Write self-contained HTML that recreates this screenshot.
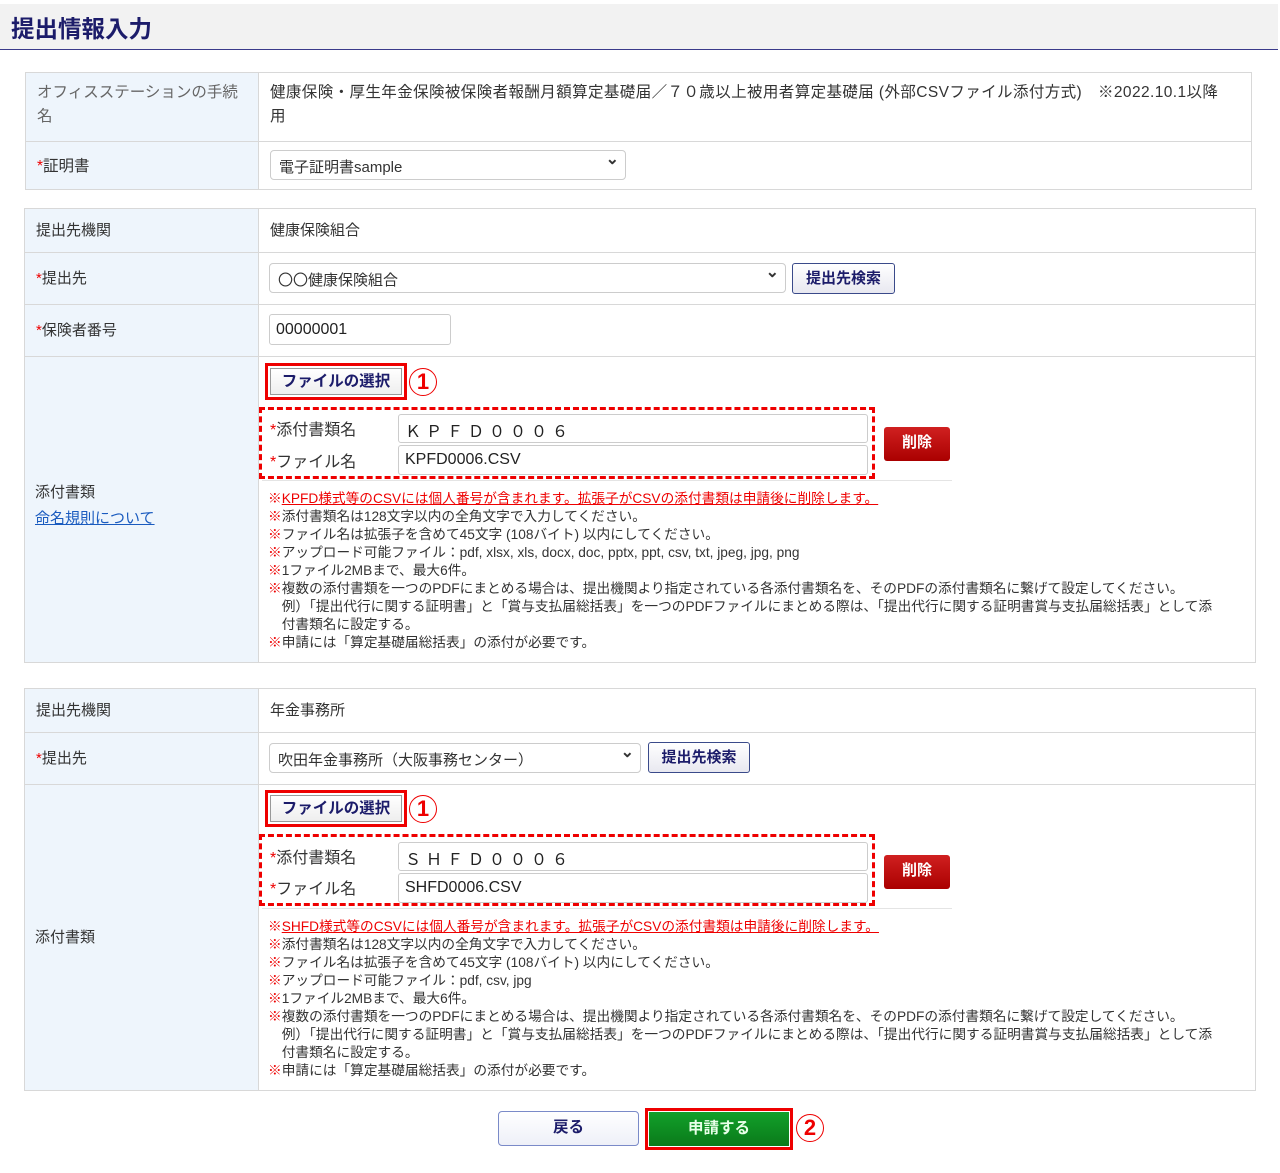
<!DOCTYPE html>
<html><head><meta charset="utf-8"><style>
*{box-sizing:border-box;margin:0;padding:0}
body{width:1280px;height:1173px;background:#fff;font-family:"Liberation Sans","Noto Sans CJK JP",sans-serif;color:#333;position:relative;overflow:hidden}
.a{position:absolute}
.hd{left:0;top:4px;width:1278px;height:46px;background:#f2f2f2;border-bottom:1.5px solid #3a3a8a}
.hd span{position:absolute;left:11px;top:6px;font-size:23.5px;font-weight:bold;color:#1c1c6a}
.tb{border:1px solid #d8d8d8}
.lab{background:#eef5fc;border-right:1px solid #d8d8d8}
.hl{border-top:1px solid #d8d8d8}
.t{font-size:15px;color:#333;white-space:nowrap}
.r{color:#e00}
.sel{border:1px solid #ccc;border-radius:4px;background:#fff;font-size:15px;padding:5px 8px;color:#333}
.sel:after{content:"⌄";position:absolute;right:6px;top:-2px;font-size:16px;font-weight:bold}
.btn{border:1px solid #3a4a8a;border-radius:3px;background:linear-gradient(#fff,#e8e8f0);font-size:15px;font-weight:bold;color:#1c1c6a;text-align:center}
.fb{border:3px solid #e00;background:#fff}
.fb div{position:absolute;left:2px;top:2px;right:2px;bottom:2px;border:1px solid #999;background:linear-gradient(#fff,#eee);font-size:15.5px;font-weight:bold;color:#1c1c6a;text-align:center;line-height:26px}
.num{width:28px;height:28px;border:1px solid #e00;border-radius:50%;color:#e00;font-size:22px;font-weight:bold;text-align:center;line-height:26px}
.dash{border:3px dashed #e00}
.inp{border:1px solid #ccc;border-radius:3px;background:#fff;font-size:16px;padding:3px 6px;color:#222}
.del{background:linear-gradient(#d02020,#a00);border-radius:3px;color:#fff;font-weight:bold;font-size:15px;text-align:center;line-height:32px}
.notes{font-size:13.7px;line-height:18px;color:#333;white-space:nowrap}
.notes b{color:#e00;font-weight:normal}
.notes u{color:#e00}
</style></head><body>
<div class="a hd"><span>提出情報入力</span></div>

<!-- table 1 -->
<div class="a tb" style="left:25px;top:72px;width:1227px;height:118px"></div>
<div class="a lab" style="left:26px;top:73px;width:233px;height:116px"></div>
<div class="a hl" style="left:26px;top:141px;width:1225px"></div>
<div class="a t" style="left:37px;top:81px;line-height:24px;color:#666;font-size:15.5px">オフィスステーションの手続<br>名</div>
<div class="a t" style="left:270px;top:81px;line-height:24px;font-size:15.5px;letter-spacing:0.4px">健康保険・厚生年金保険被保険者報酬月額算定基礎届／７０歳以上被用者算定基礎届 (外部CSVファイル添付方式)　※2022.10.1以降<br>用</div>
<div class="a t" style="left:37px;top:154px;font-size:15.5px"><span class="r">*</span>証明書</div>
<div class="a sel" style="left:270px;top:150px;width:356px;height:30px">電子証明書sample</div>

<!-- table 2 -->
<div class="a tb" style="left:24px;top:208px;width:1232px;height:455px"></div>
<div class="a lab" style="left:25px;top:209px;width:234px;height:453px"></div>
<div class="a hl" style="left:25px;top:252px;width:1230px"></div>
<div class="a hl" style="left:25px;top:304px;width:1230px"></div>
<div class="a hl" style="left:25px;top:356px;width:1230px"></div>
<div class="a t" style="left:36px;top:219px">提出先機関</div>
<div class="a t" style="left:270px;top:219px">健康保険組合</div>
<div class="a t" style="left:36px;top:267px"><span class="r">*</span>提出先</div>
<div class="a sel" style="left:269px;top:263px;width:517px;height:30px">〇〇健康保険組合</div>
<div class="a btn" style="left:792px;top:263px;width:103px;height:31px;line-height:29px">提出先検索</div>
<div class="a t" style="left:36px;top:319px"><span class="r">*</span>保険者番号</div>
<div class="a inp" style="left:269px;top:314px;width:182px;height:31px;line-height:23px">00000001</div>
<div class="a t" style="left:35px;top:480px;line-height:26px">添付書類<br><span style="color:#1a5bbf;text-decoration:underline">命名規則について</span></div>
<div class="a fb" style="left:265px;top:363px;width:142px;height:37px"><div>ファイルの選択</div></div>
<div class="a num" style="left:409px;top:368px">1</div>
<div class="a dash" style="left:259px;top:407px;width:616px;height:72px"></div>
<div class="a t" style="left:270px;top:416px;font-size:16px"><span class="r">*</span>添付書類名</div>
<div class="a inp" style="left:398px;top:414px;width:470px;height:29px;letter-spacing:5px">ＫＰＦＤ０００６</div>
<div class="a t" style="left:270px;top:448px;font-size:16px"><span class="r">*</span>ファイル名</div>
<div class="a inp" style="left:398px;top:445px;width:470px;height:30px;line-height:22px">KPFD0006.CSV</div>
<div class="a del" style="left:884px;top:427px;width:66px;height:34px">削除</div>
<div class="a" style="left:262px;top:480px;width:690px;border-top:1px solid #e4e4e4"></div>
<div class="a notes" style="left:268px;top:490px"><b>※</b><u>KPFD様式等のCSVには個人番号が含まれます。拡張子がCSVの添付書類は申請後に削除します。</u><br><b>※</b>添付書類名は128文字以内の全角文字で入力してください。<br><b>※</b>ファイル名は拡張子を含めて45文字 (108バイト) 以内にしてください。<br><b>※</b>アップロード可能ファイル：pdf, xlsx, xls, docx, doc, pptx, ppt, csv, txt, jpeg, jpg, png<br><b>※</b>1ファイル2MBまで、最大6件。<br><b>※</b>複数の添付書類を一つのPDFにまとめる場合は、提出機関より指定されている各添付書類名を、そのPDFの添付書類名に繋げて設定してください。<br>　例）「提出代行に関する証明書」と「賞与支払届総括表」を一つのPDFファイルにまとめる際は、「提出代行に関する証明書賞与支払届総括表」として添<br>　付書類名に設定する。<br><b>※</b>申請には「算定基礎届総括表」の添付が必要です。</div>

<!-- table 3 -->
<div class="a tb" style="left:24px;top:688px;width:1232px;height:403px"></div>
<div class="a lab" style="left:25px;top:689px;width:234px;height:401px"></div>
<div class="a hl" style="left:25px;top:732px;width:1230px"></div>
<div class="a hl" style="left:25px;top:784px;width:1230px"></div>
<div class="a t" style="left:36px;top:699px">提出先機関</div>
<div class="a t" style="left:270px;top:699px">年金事務所</div>
<div class="a t" style="left:36px;top:747px"><span class="r">*</span>提出先</div>
<div class="a sel" style="left:269px;top:743px;width:372px;height:30px">吹田年金事務所（大阪事務センター）</div>
<div class="a btn" style="left:648px;top:742px;width:102px;height:31px;line-height:29px">提出先検索</div>
<div class="a t" style="left:35px;top:926px">添付書類</div>
<div class="a fb" style="left:265px;top:790px;width:142px;height:37px"><div>ファイルの選択</div></div>
<div class="a num" style="left:409px;top:795px">1</div>
<div class="a dash" style="left:259px;top:834px;width:616px;height:72px"></div>
<div class="a t" style="left:270px;top:844px;font-size:16px"><span class="r">*</span>添付書類名</div>
<div class="a inp" style="left:398px;top:842px;width:470px;height:29px;letter-spacing:5px">ＳＨＦＤ０００６</div>
<div class="a t" style="left:270px;top:875px;font-size:16px"><span class="r">*</span>ファイル名</div>
<div class="a inp" style="left:398px;top:873px;width:470px;height:30px;line-height:22px">SHFD0006.CSV</div>
<div class="a del" style="left:884px;top:855px;width:66px;height:34px">削除</div>
<div class="a" style="left:262px;top:908px;width:690px;border-top:1px solid #e4e4e4"></div>
<div class="a notes" style="left:268px;top:918px"><b>※</b><u>SHFD様式等のCSVには個人番号が含まれます。拡張子がCSVの添付書類は申請後に削除します。</u><br><b>※</b>添付書類名は128文字以内の全角文字で入力してください。<br><b>※</b>ファイル名は拡張子を含めて45文字 (108バイト) 以内にしてください。<br><b>※</b>アップロード可能ファイル：pdf, csv, jpg<br><b>※</b>1ファイル2MBまで、最大6件。<br><b>※</b>複数の添付書類を一つのPDFにまとめる場合は、提出機関より指定されている各添付書類名を、そのPDFの添付書類名に繋げて設定してください。<br>　例）「提出代行に関する証明書」と「賞与支払届総括表」を一つのPDFファイルにまとめる際は、「提出代行に関する証明書賞与支払届総括表」として添<br>　付書類名に設定する。<br><b>※</b>申請には「算定基礎届総括表」の添付が必要です。</div>

<!-- buttons -->
<div class="a" style="left:498px;top:1111px;width:141px;height:35px;border:1.5px solid #7a8ac8;border-radius:4px;background:linear-gradient(#fff,#eef0f8);text-align:center;line-height:32px;font-weight:bold;font-size:15.5px;color:#1c1c6a">戻る</div>
<div class="a" style="left:645px;top:1108px;width:148px;height:42px;border:3px solid #e00;background:#fff"></div>
<div class="a" style="left:649px;top:1112px;width:140px;height:34px;background:linear-gradient(#12a02a,#0a7a1a);text-align:center;line-height:34px;font-weight:bold;font-size:15.5px;color:#e8ffe8">申請する</div>
<div class="a num" style="left:796px;top:1114px">2</div>
</body></html>
